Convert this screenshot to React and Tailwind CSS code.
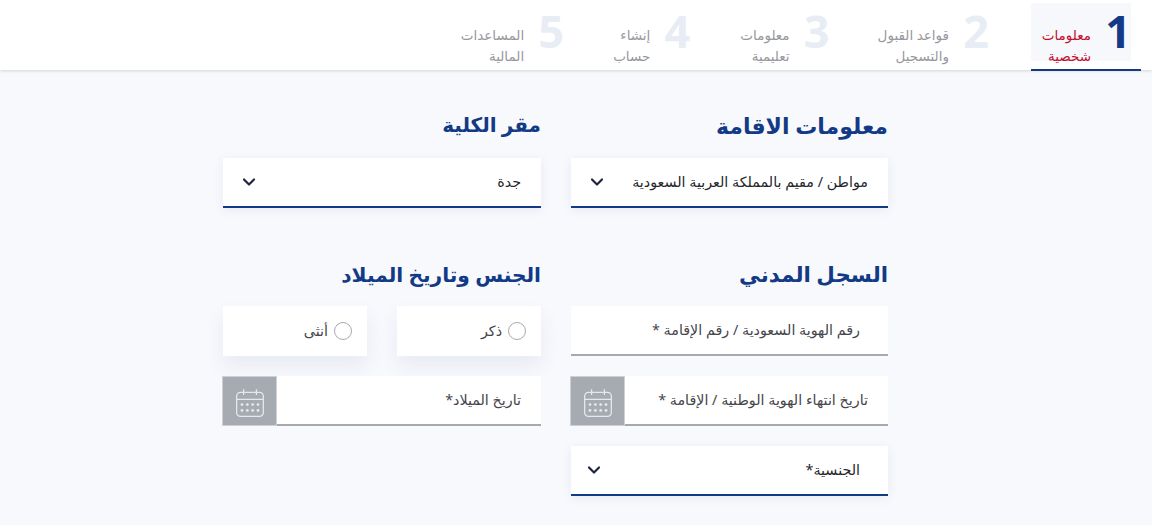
function Chevron() {
  return (
    <svg width="14" height="14" viewBox="0 0 14 14" fill="none" stroke="#1f2440" strokeWidth="2.2" strokeLinecap="round" strokeLinejoin="round">
      <path d="M2 4.5 L7 9.5 L12 4.5" />
    </svg>
  );
}

function Calendar() {
  return (
    <svg width="32" height="32" viewBox="0 0 30 30" fill="none" stroke="#e6e8ec" strokeWidth="1.2">
      <rect x="2.5" y="5" width="25" height="22.5" rx="3.5" />
      <path d="M2.5 11.5 H27.5 M9 2 V7.5 M21 2 V7.5" />
      <g fill="#e6e8ec" stroke="none">
        <circle cx="7.5" cy="16.5" r="1.3" /><circle cx="12.5" cy="16.5" r="1.3" /><circle cx="17.5" cy="16.5" r="1.3" /><circle cx="22.5" cy="16.5" r="1.3" />
        <circle cx="7.5" cy="22" r="1.3" /><circle cx="12.5" cy="22" r="1.3" /><circle cx="17.5" cy="22" r="1.3" /><circle cx="22.5" cy="22" r="1.3" />
      </g>
    </svg>
  );
}

function Step({ n, a, b, active, cls }) {
  return (
    <div className={`flex gap-[9px] h-[58px] ${cls}`}>
      <span className={`w-[36px] text-center font-['Noto_Sans'] font-bold text-[45px] leading-[62px] mt-[-3px] ${active ? "text-[#123a85]" : "text-[#e8ecf5]"}`}>{n}</span>
      <div className={`pt-[22px] text-[13.5px] leading-[21px] whitespace-nowrap ${active ? "text-[#c40d2e]" : "text-[#96989e]"}`}>
        <div>{a}</div>
        <div>{b}</div>
      </div>
    </div>
  );
}

function Select({ label, cls }) {
  return (
    <div className={`h-[50px] bg-white border-b-2 border-[#123a85] shadow-[0_2px_10px_rgba(40,60,120,0.08)] flex items-center justify-between text-[14.3px] text-[#26262c] ${cls}`}>
      <span>{label}</span>
      <Chevron />
    </div>
  );
}

function DateField({ label }) {
  return (
    <div className="h-[50px] flex ml-[-1px]">
      <div className="flex-1 bg-white border-b-2 border-[#a6a9ae] flex items-center pr-[20px] text-[14.3px] text-[#45454b]">{label}</div>
      <div className="w-[55px] pt-[3px] bg-[#a6abb2] border border-[#cdd0d4] flex items-center justify-center"><Calendar /></div>
    </div>
  );
}

function Radio({ label }) {
  return (
    <div className="w-[144px] h-[50px] bg-white shadow-[0_10px_20px_rgba(40,60,120,0.08)] flex items-center gap-[6px] pr-[15px] text-[14.3px] text-[#45454b]">
      <span className="w-[18px] h-[18px] rounded-full border border-[#a6a9ae] bg-white" />
      <span>{label}</span>
    </div>
  );
}

function Heading({ children, cls }) {
  return <h2 className={`leading-[30px] font-bold text-[#123a85] ${cls}`}>{children}</h2>;
}

export default function App() {
  return (
    <div dir="rtl" className="w-[1152px] h-[525px] overflow-hidden bg-[#f8f9fd] font-['Noto_Sans','DejaVu_Sans',sans-serif]">
      <header className="h-[70px] bg-white shadow-[0_1px_3px_rgba(0,0,0,0.15)] flex pr-[11px] pt-[3px]">
        <div className="w-[110px] h-[68px] border-b-2 border-[#123a85] ml-[37px]">
          <div className="w-[100px] h-[58px] mr-[10px] bg-[#f7f8fc]">
            <Step n="1" a="معلومات" b="شخصية" active cls="mr-[-5px]" />
          </div>
        </div>
        <Step n="2" a="قواعد القبول" b="والتسجيل" cls="ml-[43px]" />
        <Step n="3" a="معلومات" b="تعليمية" cls="ml-[45px]" />
        <Step n="4" a="إنشاء" b="حساب" cls="ml-[44px]" />
        <Step n="5" a="المساعدات" b="المالية" />
      </header>
      <main className="w-[665px] mr-[264px] grid grid-cols-[317px_318px] gap-x-[30px]">
        <section className="pt-[40px]">
          <Heading cls="text-[22px]">معلومات الاقامة</Heading>
          <Select label="مواطن / مقيم بالمملكة العربية السعودية" cls="mt-[18px] pr-[20px] pl-[19px]" />
        </section>
        <section className="pt-[40px]">
          <Heading cls="text-[20px]">مقر الكلية</Heading>
          <Select label="جدة" cls="mt-[18px] pr-[20px] pl-[19px]" />
        </section>
        <section className="pt-[51px]">
          <Heading cls="text-[21.4px]">السجل المدني</Heading>
          <div className="mt-[17px] h-[50px] bg-white border-b-2 border-[#a6a9ae] flex items-center pr-[28px] text-[14.3px] text-[#45454b]">رقم الهوية السعودية / رقم الإقامة *</div>
          <div className="mt-[20px]"><DateField label="تاريخ انتهاء الهوية الوطنية / الإقامة *" /></div>
          <Select label="الجنسية*" cls="mt-[20px] pr-[28px] pl-[16px]" />
        </section>
        <section className="pt-[51px]">
          <Heading cls="text-[20.2px]">الجنس وتاريخ الميلاد</Heading>
          <div className="mt-[17px] flex justify-between">
            <Radio label="ذكر" />
            <Radio label="أنثى" />
          </div>
          <div className="mt-[20px]"><DateField label="تاريخ الميلاد*" /></div>
        </section>
      </main>
    </div>
  );
}
